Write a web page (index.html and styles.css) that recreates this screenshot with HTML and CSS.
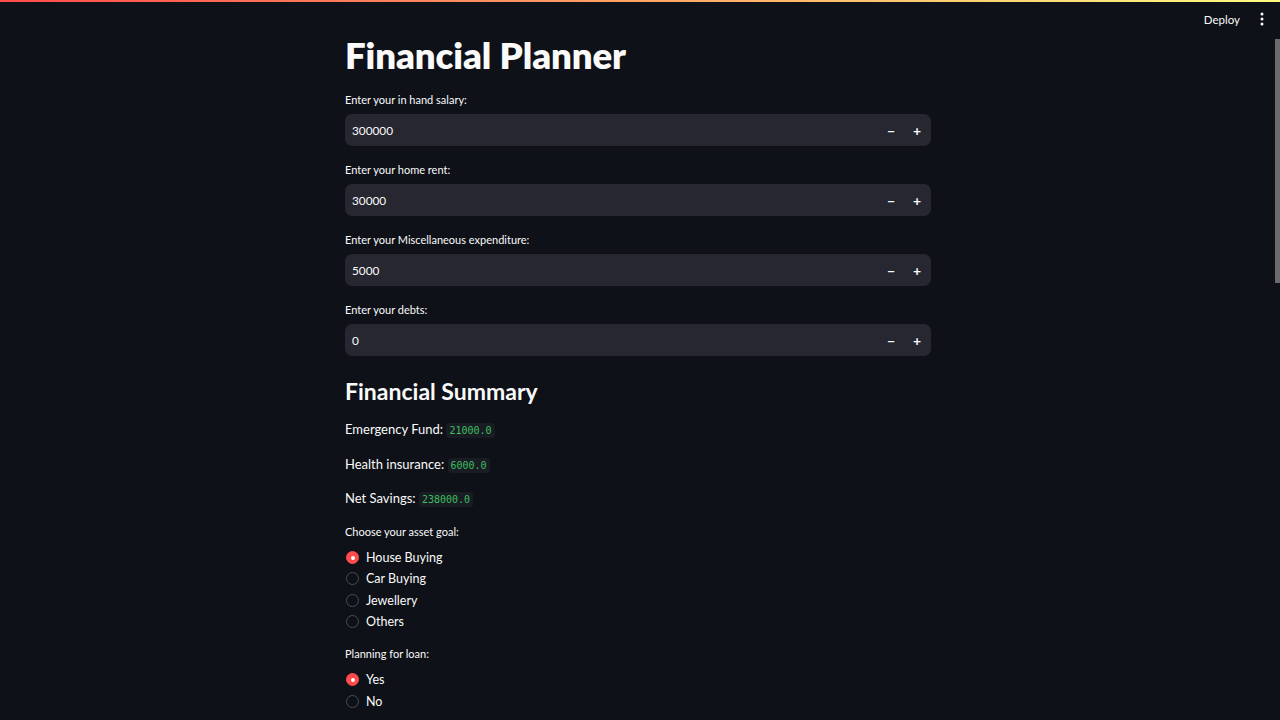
FILE: index.html
```html
<!DOCTYPE html>
<html lang="en">
<head>
<meta charset="utf-8">
<title>Financial Planner</title>
<link rel="stylesheet" href="styles.css">
</head>
<body>
<div class="decoration"></div>
<header class="topbar">
  <span class="deploy">Deploy</span>
  <svg class="menu" width="4" height="14" viewBox="0 0 4 14"><circle cx="2" cy="2" r="1.5" fill="#fafafa"/><circle cx="2" cy="7" r="1.5" fill="#fafafa"/><circle cx="2" cy="12" r="1.5" fill="#fafafa"/></svg>
</header>
<div class="app">
  <main class="main">
    <h1 class="title">Financial Planner</h1>

    <div class="field">
      <label class="label">Enter your in hand salary:</label>
      <div class="numinput"><span class="value">300000</span><span class="step">−</span><span class="step">+</span></div>
    </div>
    <div class="field">
      <label class="label">Enter your home rent:</label>
      <div class="numinput"><span class="value">30000</span><span class="step">−</span><span class="step">+</span></div>
    </div>
    <div class="field">
      <label class="label">Enter your Miscellaneous expenditure:</label>
      <div class="numinput"><span class="value">5000</span><span class="step">−</span><span class="step">+</span></div>
    </div>
    <div class="field">
      <label class="label">Enter your debts:</label>
      <div class="numinput"><span class="value">0</span><span class="step">−</span><span class="step">+</span></div>
    </div>

    <h3 class="subheader">Financial Summary</h3>
    <p class="stat">Emergency Fund: <code>21000.0</code></p>
    <p class="stat">Health insurance: <code>6000.0</code></p>
    <p class="stat">Net Savings: <code>238000.0</code></p>

    <div class="radiogroup">
      <div class="label">Choose your asset goal:</div>
      <div class="options">
        <div class="option"><span class="dot on"></span>House Buying</div>
        <div class="option"><span class="dot"></span>Car Buying</div>
        <div class="option"><span class="dot"></span>Jewellery</div>
        <div class="option"><span class="dot"></span>Others</div>
      </div>
    </div>
    <div class="radiogroup">
      <div class="label">Planning for loan:</div>
      <div class="options">
        <div class="option"><span class="dot on"></span>Yes</div>
        <div class="option"><span class="dot"></span>No</div>
      </div>
    </div>
  </main>
</div>
<div class="scrollthumb"></div>
</body>
</html>
```
FILE: styles.css
```css
html, body {
  margin: 0;
  padding: 0;
  height: 720px;
  overflow: hidden;
  background: #0e1117;
  color: #fafafa;
  font-family: Lato, "Noto Sans", sans-serif;
}
.decoration {
  height: 2px;
  background: linear-gradient(90deg, #ff4b4b, #fffd80);
}
.topbar {
  position: absolute;
  top: 1px;
  right: 0;
  height: 36px;
  display: flex;
  align-items: center;
  gap: 20px;
  padding-right: 16px;
}
.deploy {
  font-size: 11.5px;
  color: #fafafa;
}
.menu { display: block; }
.app {
  display: flex;
  justify-content: center;
  padding-right: 4px;
}
.main {
  width: 586px;
  display: flex;
  flex-direction: column;
}
.title {
  margin: 31px 0 0 0;
  font-size: 36.6px;
  font-weight: 800;
  line-height: 44px;
  letter-spacing: -0.1px;
}
.field {
  display: flex;
  flex-direction: column;
  margin-top: 16px;
}
.field + .field { margin-top: 17px; }
.label {
  font-size: 11px;
  line-height: 14px;
  height: 14px;
  margin-bottom: 7px;
}
.numinput {
  height: 32px;
  background: #262730;
  border-radius: 7px;
  display: flex;
  align-items: center;
  padding-left: 7px;
  font-size: 11.8px;
}
.value { flex: 1; }
.step {
  width: 26px;
  text-align: center;
  font-size: 14px;
  font-weight: 700;
}
.step:last-child { margin-right: 1px; }
.subheader {
  margin: 20px 0 0 0;
  font-size: 23px;
  line-height: 30px;
  font-weight: 700;
}
.stat {
  margin: 13px 0 0 0;
  font-size: 13px;
  line-height: 20px;
}
.stat + .stat { margin-top: 14.5px; }
.stat + .stat { margin-top: 12.5px; }
.stat code {
  font-family: "DejaVu Sans Mono", monospace;
  font-size: 10px;
  color: #3cbf5f;
  background: #1a1c24;
  border-radius: 3px;
  padding: 2px 3px;
}
.radiogroup {
  margin-top: 15px;
  display: flex;
  flex-direction: column;
}
.radiogroup .label { margin-bottom: 8px; }
.options {
  display: flex;
  flex-direction: column;
}
.option {
  height: 21.3px;
  display: flex;
  align-items: center;
  font-size: 12.5px;
  gap: 7px;
}
.dot {
  width: 11px;
  height: 11px;
  border: 1px solid #4a4c55;
  border-radius: 50%;
  margin-left: 1px;
  box-sizing: content-box;
}
.dot.on {
  background: #ff4b4b;
  border-color: #ff4b4b;
  position: relative;
}
.dot.on::after {
  content: "";
  position: absolute;
  left: 3.5px;
  top: 3.5px;
  width: 4px;
  height: 4px;
  border-radius: 50%;
  background: #fff;
}
.scrollthumb {
  position: absolute;
  right: 0;
  top: 39px;
  width: 5px;
  height: 244px;
  background: #6b6b6b;
}
```
